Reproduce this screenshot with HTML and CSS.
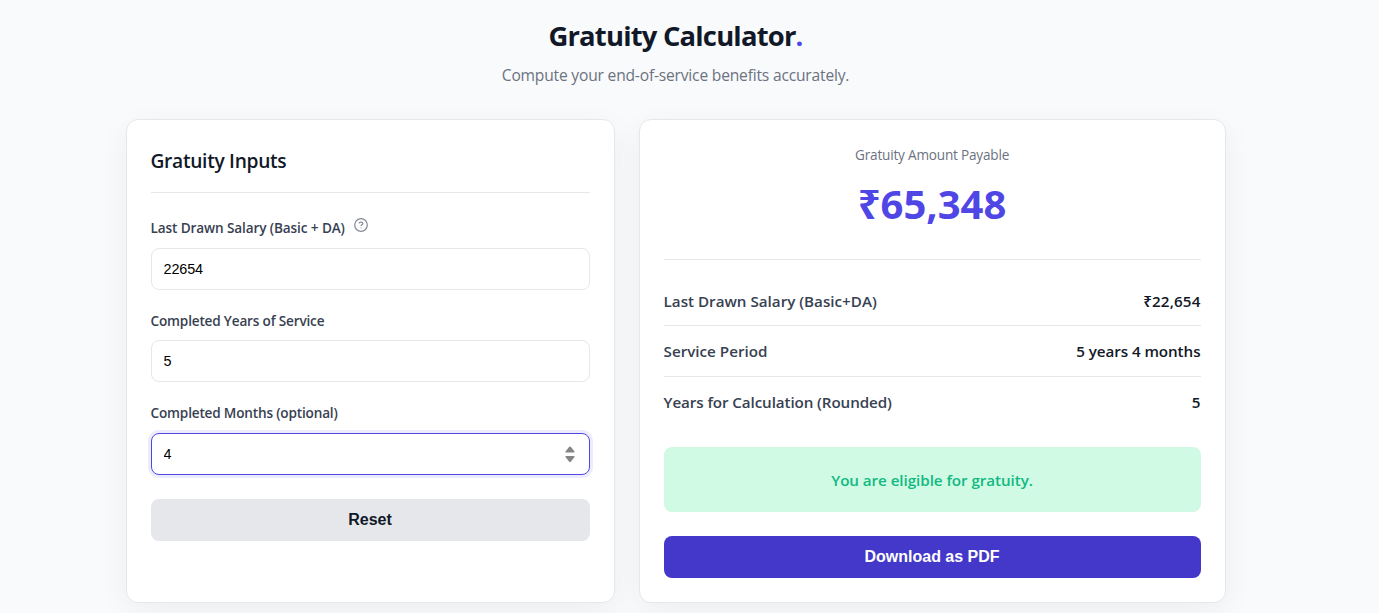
FILE: index.html
```html
<!DOCTYPE html>
<html lang="en">
<head>
    <meta charset="UTF-8">
    <meta name="viewport" content="width=device-width, initial-scale=1.0">
    <title>Gratuity Calculator</title>
    <link rel="stylesheet" href="styles.css">
</head>
<body>
    <div class="container">
        <header class="header">
            <h1>Gratuity Calculator<span class="dot">.</span></h1>
            <p>Compute your end-of-service benefits accurately.</p>
        </header>

        <main class="grid">
            <section class="card">
                <h2>Gratuity Inputs</h2>
                <div class="form-group">
                    <label for="salary" class="label-salary">Last Drawn Salary (Basic + DA)
                        <svg class="help" viewBox="0 0 16 16" width="16" height="16">
                            <circle cx="8" cy="8" r="6.3"/>
                            <path d="M6 6.4C6.3 4.8 9.7 4.6 9.9 6.5C10 7.8 8 7.8 8 9.1M8 10.4V11.2"/>
                        </svg>
                    </label>
                    <input type="text" id="salary" value="22654">
                </div>
                <div class="form-group">
                    <label for="years">Completed Years of Service</label>
                    <input type="text" id="years" value="5">
                </div>
                <div class="form-group">
                    <label for="months">Completed Months (optional)</label>
                    <div class="number-input">
                        <input type="text" id="months" value="4">
                        <svg class="spinner" viewBox="0 0 10 16" width="10" height="16">
                            <path d="M0.5 6.5V5.5L4 1Q5 0 6 1L9.5 5.5V6.5ZM0.5 10H9.5V11L6 15.5Q5 16.5 4 15.5L0.5 11Z"/>
                        </svg>
                    </div>
                </div>
                <button type="button" class="btn btn-reset">Reset</button>
            </section>

            <section class="card">
                <div class="result">
                    <div class="result-label">Gratuity Amount Payable</div>
                    <div class="result-amount">₹65,348</div>
                </div>
                <div class="rows">
                    <div class="row"><span>Last Drawn Salary (Basic+DA)</span><strong class="amount">₹22,654</strong></div>
                    <div class="row"><span>Service Period</span><strong class="period">5 years 4 months</strong></div>
                    <div class="row"><span class="rounded">Years for Calculation (Rounded)</span><strong>5</strong></div>
                </div>
                <div class="message">You are eligible for gratuity.</div>
                <button type="button" class="btn btn-primary">Download as PDF</button>
            </section>
        </main>
    </div>
</body>
</html>
```

FILE: styles.css
```css
* { box-sizing: border-box; margin: 0; padding: 0; }
body {
    font-family: "Segoe UI", "Open Sans", "Noto Sans", sans-serif;
    background: #f9fafc;
    color: #111827;
    padding: 18px 28px 0 0;
    height: 613px;
    overflow: hidden;
}
.container { width: 1100px; margin: 0 auto; }

.header { text-align: center; height: 101px; }
.header h1 { font-size: 27.4px; line-height: 36px; font-weight: 700; letter-spacing: -0.8px; }
.header p { font-size: 15.6px; line-height: 24px; margin-top: 9px; color: #6b7280; letter-spacing: -0.19px; }
.dot { color: #4f46e5; }

.grid { display: grid; grid-template-columns: 1fr 1.2fr; gap: 24px; }
.card {
    background: #fff;
    border: 1px solid #e5e7eb;
    border-radius: 12px;
    padding: 24px;
    height: 484px;
    box-shadow: 0 8px 30px rgba(0, 0, 0, 0.05);
}

/* inputs */
.card h2 {
    font-size: 19.2px;
    line-height: 33px;
    height: 49px;
    font-weight: 600;
    letter-spacing: -0.3px;
    border-bottom: 1px solid #e5e7eb;
    margin-bottom: 24px;
}
.form-group { margin-bottom: 20px; }
.form-group label {
    display: flex;
    align-items: center;
    gap: 8px;
    height: 21.5px;
    margin-bottom: 9px;
    font-size: 13.6px;
    font-weight: 600;
    letter-spacing: -0.18px;
    color: #374151;
}
.form-group .label-salary { letter-spacing: -0.12px; }
.form-group input {
    display: block;
    width: 100%;
    height: 42px;
    padding: 0 12px;
    border: 1px solid #e5e7eb;
    border-radius: 8px;
    background: #fff;
    color: #000;
    font-family: "Liberation Sans", Arial, sans-serif;
    font-size: 14.4px;
    letter-spacing: -0.1px;
    outline: none;
}
.help { fill: none; stroke: #858a96; stroke-width: 1.2; margin-top: -6px; }
.number-input { position: relative; }
.form-group .number-input input { border-color: #4f46e5; box-shadow: 0 0 0 3px rgba(79, 70, 229, 0.1); }
.spinner { position: absolute; right: 15px; top: 13px; fill: #858585; }

.btn {
    display: block;
    width: 100%;
    height: 42px;
    border: none;
    border-radius: 8px;
    font-family: "Liberation Sans", Arial, sans-serif;
    font-size: 16px;
    font-weight: 700;
    cursor: pointer;
}
.btn-reset { background: #e5e7eb; color: #111827; margin-top: 24px; }
.btn-primary { background: #4338ca; color: #fff; }

/* results */
.result { height: 116px; text-align: center; border-bottom: 1px solid #e5e7eb; margin-bottom: 15.6px; }
.result-label { font-size: 13.6px; line-height: 22px; color: #6b7280; letter-spacing: -0.2px; }
.result-amount { font-size: 40px; line-height: 64px; margin-top: 6px; font-weight: 700; color: #4f46e5; }
.rows { margin-bottom: 19.6px; }
.row {
    display: flex;
    justify-content: space-between;
    align-items: center;
    height: 50.6px;
    border-bottom: 1px solid #e5e7eb;
    font-size: 15.2px;
    font-weight: 600;
    color: #374151;
}
.row:first-child { padding-top: 1px; }
.row:last-child { border-bottom: none; }
.row strong { font-weight: 600; color: #111827; }
.row .amount { letter-spacing: 0.15px; }
.row .period { letter-spacing: -0.06px; }
.row .rounded { letter-spacing: -0.1px; }
.message {
    height: 65px;
    line-height: 66px;
    margin-bottom: 24px;
    border-radius: 8px;
    background: #d1fae5;
    color: #10b981;
    text-align: center;
    font-size: 15.2px;
    font-weight: 600;
    letter-spacing: -0.06px;
}
```
